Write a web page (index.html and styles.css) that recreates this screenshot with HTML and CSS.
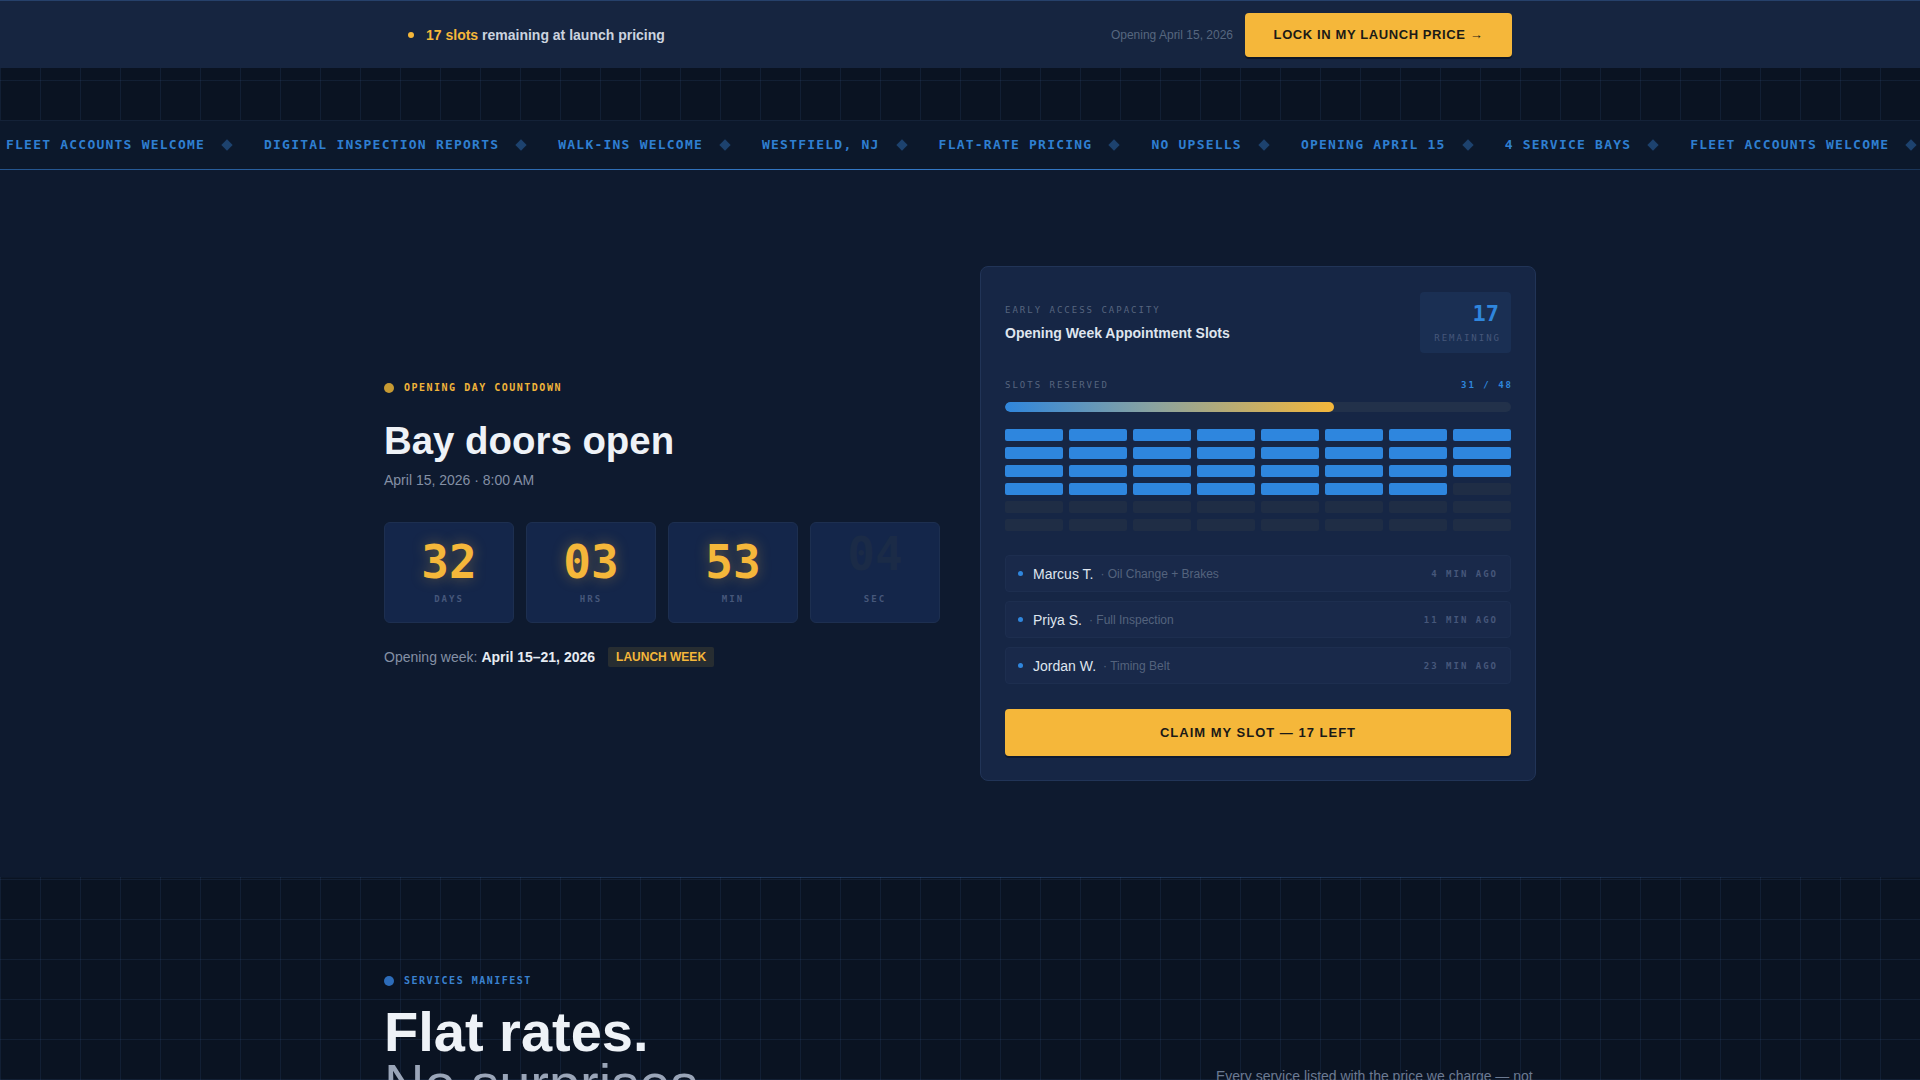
FILE: index.html
```html
<!DOCTYPE html>
<html lang="en">
<head>
<meta charset="utf-8">
<title>Opening Week — Launch Pricing</title>
<link rel="stylesheet" href="styles.css">
</head>
<body>
<header class="topbar">
  <div class="topbar-inner">
    <div class="slots-note"><span class="note-dot"></span><span class="gold">17 slots</span>&nbsp;remaining at launch pricing</div>
    <div class="topbar-right">
      <span class="open-date">Opening April 15, 2026</span>
      <a class="btn-lock" href="#claim">LOCK IN MY LAUNCH PRICE →</a>
    </div>
  </div>
</header>
<div class="grid-gap"></div>
<div class="ticker">
  <div class="ticker-track">
    <span class="tk-item">FLEET ACCOUNTS WELCOME</span><span class="tk-sep"></span>
    <span class="tk-item">DIGITAL INSPECTION REPORTS</span><span class="tk-sep"></span>
    <span class="tk-item">WALK-INS WELCOME</span><span class="tk-sep"></span>
    <span class="tk-item">WESTFIELD, NJ</span><span class="tk-sep"></span>
    <span class="tk-item">FLAT-RATE PRICING</span><span class="tk-sep"></span>
    <span class="tk-item">NO UPSELLS</span><span class="tk-sep"></span>
    <span class="tk-item">OPENING APRIL 15</span><span class="tk-sep"></span>
    <span class="tk-item">4 SERVICE BAYS</span><span class="tk-sep"></span>
    <span class="tk-item">FLEET ACCOUNTS WELCOME</span><span class="tk-sep"></span>
    <span class="tk-item">DIGITAL INSPECTION REPORTS</span><span class="tk-sep"></span>
  </div>
</div>

<section class="hero">
  <div class="hero-inner">
    <div class="countdown-col">
      <div class="eyebrow eyebrow-gold"><span class="eb-dot"></span>OPENING DAY COUNTDOWN</div>
      <h1 class="hero-title">Bay doors open</h1>
      <p class="hero-sub">April 15, 2026 · 8:00 AM</p>
      <div class="cd-grid">
        <div class="cd-box"><span class="cd-num">32</span><span class="cd-label">DAYS</span></div>
        <div class="cd-box"><span class="cd-num">03</span><span class="cd-label">HRS</span></div>
        <div class="cd-box"><span class="cd-num">53</span><span class="cd-label">MIN</span></div>
        <div class="cd-box"><span class="cd-num cd-flip">04</span><span class="cd-label">SEC</span></div>
      </div>
      <p class="week-line">Opening week: <strong>April 15–21, 2026</strong><span class="badge">LAUNCH WEEK</span></p>
    </div>

    <div class="cap-card" id="claim">
      <div class="cap-head">
        <div class="cap-titles">
          <div class="cap-kicker">EARLY ACCESS CAPACITY</div>
          <div class="cap-title">Opening Week Appointment Slots</div>
        </div>
        <div class="remain-box">
          <span class="remain-num">17</span>
          <span class="remain-label">REMAINING</span>
        </div>
      </div>
      <div class="res-row">
        <span class="res-label">SLOTS RESERVED</span>
        <span class="res-count">31 / 48</span>
      </div>
      <div class="progress"><div class="progress-fill" style="width:65%"></div></div>
      <div class="slot-grid">
        <span class="slot on"></span><span class="slot on"></span><span class="slot on"></span><span class="slot on"></span><span class="slot on"></span><span class="slot on"></span><span class="slot on"></span><span class="slot on"></span>
        <span class="slot on"></span><span class="slot on"></span><span class="slot on"></span><span class="slot on"></span><span class="slot on"></span><span class="slot on"></span><span class="slot on"></span><span class="slot on"></span>
        <span class="slot on"></span><span class="slot on"></span><span class="slot on"></span><span class="slot on"></span><span class="slot on"></span><span class="slot on"></span><span class="slot on"></span><span class="slot on"></span>
        <span class="slot on"></span><span class="slot on"></span><span class="slot on"></span><span class="slot on"></span><span class="slot on"></span><span class="slot on"></span><span class="slot on"></span><span class="slot"></span>
        <span class="slot"></span><span class="slot"></span><span class="slot"></span><span class="slot"></span><span class="slot"></span><span class="slot"></span><span class="slot"></span><span class="slot"></span>
        <span class="slot"></span><span class="slot"></span><span class="slot"></span><span class="slot"></span><span class="slot"></span><span class="slot"></span><span class="slot"></span><span class="slot"></span>
      </div>
      <ul class="activity">
        <li class="act-row"><span class="act-dot"></span><span class="act-name">Marcus T.</span><span class="act-svc">· Oil Change + Brakes</span><span class="act-time">4 MIN AGO</span></li>
        <li class="act-row"><span class="act-dot"></span><span class="act-name">Priya S.</span><span class="act-svc">· Full Inspection</span><span class="act-time">11 MIN AGO</span></li>
        <li class="act-row"><span class="act-dot"></span><span class="act-name">Jordan W.</span><span class="act-svc">· Timing Belt</span><span class="act-time">23 MIN AGO</span></li>
      </ul>
      <a class="btn-claim" href="#claim">CLAIM MY SLOT — 17 LEFT</a>
    </div>
  </div>
</section>

<section class="services">
  <div class="services-inner">
    <div class="services-head">
      <div>
        <div class="eyebrow eyebrow-blue"><span class="eb-dot"></span>SERVICES MANIFEST</div>
        <h2 class="services-title"><span class="hard">Flat rates.</span><span class="soft">No surprises.</span></h2>
      </div>
      <p class="services-lead">Every service listed with the price we charge — not a range, not an estimate. Parts and labor included, tax shown up front.</p>
    </div>
  </div>
</section>
</body>
</html>
```
FILE: styles.css
```css
* { box-sizing: border-box; }

html, body { margin: 0; padding: 0; }

body {
  background-color: #0a1322;
  background-image:
    linear-gradient(rgba(70, 110, 170, 0.13) 1px, transparent 1px),
    linear-gradient(90deg, rgba(70, 110, 170, 0.13) 1px, transparent 1px);
  background-size: 40px 40px;
  font-family: "Liberation Sans", Arial, sans-serif;
  color: #e6ebf2;
  overflow: hidden;
}

a { text-decoration: none; }

/* ---------- top bar ---------- */
.topbar {
  background: #162540;
  border-top: 1px solid #26416b;
  height: 68px;
  display: flex;
  align-items: center;
}
.topbar-inner {
  width: 1104px;
  margin: 0 auto;
  display: flex;
  align-items: center;
  justify-content: space-between;
}
.slots-note {
  display: flex;
  align-items: center;
  font-size: 14px;
  font-weight: 700;
  color: #cbd3df;
}
.note-dot {
  width: 6px;
  height: 6px;
  border-radius: 50%;
  background: #f5b73a;
  margin-right: 12px;
}
.gold { color: #f5b73a; }
.topbar-right {
  display: flex;
  align-items: center;
  gap: 12px;
}
.open-date {
  font-size: 12px;
  color: #56677f;
}
.btn-lock {
  display: flex;
  align-items: center;
  justify-content: center;
  width: 267px;
  height: 44px;
  background: #f5b73a;
  color: #1b1a17;
  font-size: 13px;
  font-weight: 700;
  letter-spacing: 0.6px;
  border-radius: 4px;
  box-shadow: 0 2px 0 #0c1628;
}

.grid-gap { height: 52px; }

/* ---------- ticker ---------- */
.ticker {
  height: 50px;
  display: flex;
  align-items: center;
  overflow: hidden;
  background:
    linear-gradient(90deg, #24548d 0%, #3378c6 45%, #2f6fb8 75%, #1a3457 100%) left bottom / 100% 1px no-repeat,
    #0c182b;
  border-top: 1px solid #142238;
}
.ticker-track {
  display: flex;
  align-items: center;
  white-space: nowrap;
  padding-left: 6px;
  margin-top: -2px;
}
.tk-item {
  font-family: "DejaVu Sans Mono", "Liberation Mono", monospace;
  font-weight: 700;
  font-size: 13px;
  letter-spacing: 1.22px;
  color: #2f7fd1;
}
.tk-sep {
  flex: none;
  width: 8px;
  height: 8px;
  background: #1d426e;
  transform: rotate(45deg);
  margin: 0 33px 0 18px;
}

/* ---------- hero ---------- */
.hero {
  background: #0e1a2f;
  padding: 96px 0;
}
.hero-inner {
  width: 1152px;
  margin: 0 auto;
  display: flex;
  align-items: center;
  justify-content: space-between;
}
.countdown-col { width: 556px; margin-top: 1px; }

.eyebrow {
  display: flex;
  align-items: center;
  font-family: "DejaVu Sans Mono", "Liberation Mono", monospace;
  font-weight: 700;
  font-size: 10px;
  line-height: 12px;
  letter-spacing: 1.5px;
}
.eb-dot {
  width: 10px;
  height: 10px;
  border-radius: 50%;
  margin-right: 10px;
}
.eyebrow-gold { color: #f0b43a; }
.eyebrow-gold .eb-dot { background: #c79a33; }
.eyebrow-blue { color: #3a82d0; }
.eyebrow-blue .eb-dot { background: #2d6cb9; }

.hero-title {
  margin: 26px 0 0;
  font-size: 38.4px;
  line-height: 42px;
  font-weight: 700;
  color: #eef2f7;
}
.hero-sub {
  margin: 8px 0 0;
  font-size: 14px;
  line-height: 20px;
  color: #8490a5;
}

.cd-grid {
  margin-top: 32px;
  display: grid;
  grid-template-columns: repeat(4, 130px);
  gap: 12px;
}
.cd-box {
  height: 101px;
  background: #14264a;
  border: 1px solid #1d2f50;
  border-radius: 6px;
  display: flex;
  flex-direction: column;
  align-items: center;
  padding-top: 16px;
}
.cd-num {
  font-family: "DejaVu Sans Mono", "Liberation Mono", monospace;
  font-weight: 700;
  font-size: 46px;
  line-height: 46px;
  color: #f5b73a;
  text-shadow: 0 0 14px rgba(245, 183, 58, 0.35);
}
.cd-flip {
  color: #1b2b47;
  text-shadow: none;
  transform: translateY(-8px);
}
.cd-label {
  margin-top: 8px;
  font-family: "DejaVu Sans Mono", "Liberation Mono", monospace;
  font-weight: 700;
  font-size: 9px;
  line-height: 12px;
  letter-spacing: 2px;
  color: #46577a;
}

.week-line {
  margin: 24px 0 0;
  display: flex;
  align-items: center;
  font-size: 14px;
  line-height: 20px;
  color: #8490a5;
}
.week-line strong {
  color: #e6ebf2;
  margin-left: 4px;
}
.badge {
  margin-left: 13px;
  height: 20px;
  padding: 0 8px;
  display: flex;
  align-items: center;
  background: #272d31;
  color: #f5b73a;
  font-size: 12px;
  font-weight: 700;
  border-radius: 2px;
}

/* ---------- capacity card ---------- */
.cap-card {
  width: 556px;
  background: #162645;
  border: 1px solid #213457;
  border-radius: 8px;
  padding: 25px 24px 24px;
}
.cap-head {
  display: flex;
  align-items: center;
  justify-content: space-between;
}
.cap-titles { padding-top: 2px; }
.cap-kicker {
  font-family: "DejaVu Sans Mono", "Liberation Mono", monospace;
  font-size: 9px;
  line-height: 12px;
  letter-spacing: 2px;
  color: #56657f;
}
.cap-title {
  margin-top: 7px;
  font-size: 14px;
  line-height: 20px;
  font-weight: 700;
  color: #dfe5ee;
}
.remain-box {
  width: 91px;
  height: 61px;
  background: #1a2f53;
  border-radius: 4px;
  padding: 9px 12px 0;
  display: flex;
  flex-direction: column;
  align-items: flex-end;
}
.remain-num {
  font-family: "DejaVu Sans Mono", "Liberation Mono", monospace;
  font-weight: 700;
  font-size: 22px;
  line-height: 26px;
  color: #2f86dd;
}
.remain-label {
  margin-top: 5px;
  font-family: "DejaVu Sans Mono", "Liberation Mono", monospace;
  font-size: 9px;
  line-height: 12px;
  letter-spacing: 2px;
  color: #46577a;
  margin-right: -2px;
}

.res-row {
  margin-top: 26px;
  display: flex;
  justify-content: space-between;
  align-items: center;
  font-family: "DejaVu Sans Mono", "Liberation Mono", monospace;
  font-size: 9px;
  line-height: 12px;
  letter-spacing: 2px;
}
.res-label { color: #56657f; }
.res-count { color: #2f86dd; font-weight: 700; margin-right: -2px; }

.progress {
  margin-top: 11px;
  height: 10px;
  border-radius: 5px;
  background: #22314a;
  overflow: hidden;
}
.progress-fill {
  height: 100%;
  border-radius: 5px;
  background: linear-gradient(90deg, #2f86dd 0%, #8aa3a0 45%, #f5b73a 100%);
}

.slot-grid {
  margin-top: 17px;
  display: grid;
  grid-template-columns: repeat(8, 1fr);
  grid-auto-rows: 12px;
  column-gap: 6px;
  row-gap: 6px;
}
.slot {
  border-radius: 2px;
  background: #1f2d45;
}
.slot.on { background: #2e86de; }

.activity {
  list-style: none;
  margin: 24px 0 0;
  padding: 0;
  display: flex;
  flex-direction: column;
  gap: 9px;
}
.act-row {
  height: 37px;
  display: flex;
  align-items: center;
  padding: 0 14px 0 12px;
  background: #19294a;
  border: 1px solid #1d2e4f;
  border-radius: 4px;
}
.act-dot {
  width: 5px;
  height: 5px;
  border-radius: 50%;
  background: #2f86dd;
  margin-right: 10px;
}
.act-name {
  font-size: 14px;
  color: #dfe5ee;
}
.act-svc {
  margin-left: 7px;
  font-size: 12px;
  color: #54637d;
}
.act-time {
  margin-left: auto;
  font-family: "DejaVu Sans Mono", "Liberation Mono", monospace;
  font-weight: 700;
  font-size: 9px;
  letter-spacing: 2px;
  color: #46577a;
  margin-right: -2px;
}

.btn-claim {
  margin-top: 25px;
  height: 47px;
  display: flex;
  align-items: center;
  justify-content: center;
  background: #f5b73a;
  color: #1b1a17;
  font-size: 13px;
  font-weight: 700;
  letter-spacing: 1px;
  border-radius: 4px;
  box-shadow: 0 2px 0 #0e1a30;
}

/* ---------- services ---------- */
.services {
  background-color: #0a1322;
  background-image:
    linear-gradient(90deg, rgba(60, 110, 180, 0.05), rgba(70, 120, 190, 0.35) 40%, rgba(70, 120, 190, 0.3) 80%, rgba(60, 110, 180, 0.05)),
    linear-gradient(rgba(70, 110, 170, 0.13) 1px, transparent 1px),
    linear-gradient(90deg, rgba(70, 110, 170, 0.13) 1px, transparent 1px);
  background-size: 100% 1px, 40px 40px, 40px 40px;
  background-position: 0 0, 0 42px, 0 0;
  background-repeat: no-repeat, repeat, repeat;
  padding: 98px 0 120px;
}
.services-inner {
  width: 1152px;
  margin: 0 auto;
}
.services-head {
  display: flex;
  justify-content: space-between;
  align-items: flex-start;
}
.services-title {
  margin: 20px 0 0;
  font-size: 56px;
  font-weight: 700;
  color: #eef2f7;
  display: flex;
  flex-direction: column;
}
.services-title .hard {
  line-height: 50px;
  height: 50px;
}
.services-title .soft {
  line-height: 50px;
  margin-top: 2px;
  font-weight: 400;
  color: #9aa5b8;
}
.services-lead {
  width: 320px;
  margin: 90px 0 0;
  font-size: 14px;
  line-height: 22px;
  color: #6c7a92;
}
```
